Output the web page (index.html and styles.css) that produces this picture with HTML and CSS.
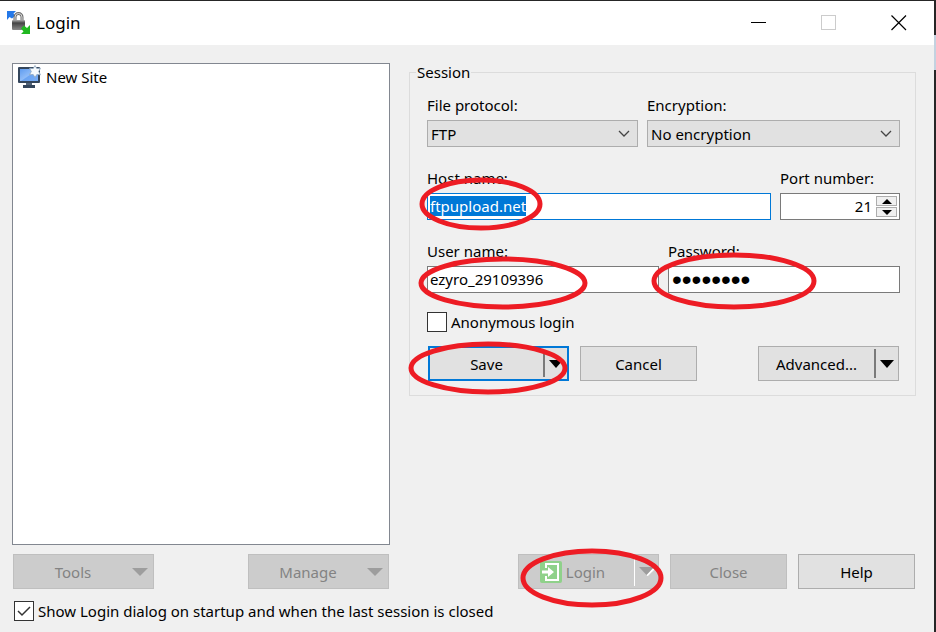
FILE: index.html
```html
<!DOCTYPE html>
<html lang="en">
<head>
  <meta charset="UTF-8">
  <meta name="viewport" content="width=device-width, initial-scale=1.0">
  <title>Login</title>
  <link rel="stylesheet" href="styles.css">
</head>
<body>
  <div class="dialog">
    <header class="titlebar">
      <svg class="app-icon" width="24" height="24" viewBox="0 0 24 24">
        <defs>
          <linearGradient id="lockBody" x1="0" x2="0" y1="0" y2="1">
            <stop offset="0" stop-color="#aaa"/>
            <stop offset="0.3" stop-color="#444"/>
            <stop offset="1" stop-color="#8a8a8a"/>
          </linearGradient>
        </defs>
        <path d="M0 0h9L6.500 2.500 8 5 5 7.500 2.500 6 0 9z" fill="#2478e8"/>
        <path d="M8 10V6a3.500 3.500 0 0 1 7 0V10" fill="none" stroke="#6c6c6c" stroke-width="3"/>
        <path d="M8 10V6a3.500 3.500 0 0 1 7 0V10" fill="none" stroke="#ddd" stroke-width="1"/>
        <rect x="5" y="9" width="13" height="10" rx="1" fill="url(#lockBody)"/>
        <path d="M23 23h-9l2.500-2.500L14 17.500l3-3 3 2.500 3-3z" fill="#20b820"/>
      </svg>
      <h1>Login</h1>
      <div class="window-buttons">
        <button type="button" aria-label="Minimize"><svg width="16" height="16"><path d="M0 7.500h15" stroke="#000"/></svg></button>
        <button type="button" aria-label="Maximize" disabled><svg width="16" height="16"><rect x="0.500" y="0.500" width="14" height="14" fill="none" stroke="#ccc"/></svg></button>
        <button type="button" aria-label="Close window"><svg width="16" height="16"><path d="M0.500 0.500l14.500 14.500M15 0.500L0.500 15" stroke="#000" stroke-width="1.200"/></svg></button>
      </div>
    </header>

    <main class="content">
      <ul class="site-list">
        <li>
          <svg width="24" height="24" viewBox="0 0 24 24">
            <defs>
              <linearGradient id="screen" x1="0" x2="1" y1="0" y2="1">
                <stop offset="0" stop-color="#5f9cf0"/>
                <stop offset="0.500" stop-color="#8fbcf8"/>
                <stop offset="0.550" stop-color="#6ba4f2"/>
                <stop offset="1" stop-color="#77aef8"/>
              </linearGradient>
            </defs>
            <rect x="0" y="2" width="22" height="16" rx="1" fill="#34465c"/>
            <rect x="2" y="4" width="18" height="12" fill="url(#screen)"/>
            <path d="M8 18h6v2h-6z" fill="#526378"/>
            <path d="M5 20h12v3H5z" fill="#34465c"/>
            <path d="M17 0.500l1.800 3 3.700-.3-1.800 3.300 1.800 3.300-3.700-.3-1.800 3-1.800-3-3.700.3 1.800-3.300-1.800-3.300 3.700.3z" fill="#f6fafd" stroke="#8ba4bd" stroke-width="0.800"/>
          </svg>
          <span>New Site</span>
        </li>
      </ul>

      <fieldset class="session">
        <legend>Session</legend>
        <div class="row row-protocol">
          <div class="field">
            <label for="protocol">File protocol:</label>
            <select id="protocol"><option>FTP</option></select>
          </div>
          <div class="field">
            <label for="encryption">Encryption:</label>
            <select id="encryption"><option>No encryption</option></select>
          </div>
        </div>
        <div class="row row-host">
          <div class="field">
            <label for="host">Host name:</label>
            <input type="text" id="host" class="host" value="ftpupload.net" autofocus>
            <svg class="mark mark-host" width="124" height="54"><ellipse cx="62" cy="27" rx="59" ry="24"/></svg>
          </div>
          <div class="field">
            <label for="port">Port number:</label>
            <div class="spinner">
              <input type="text" id="port" inputmode="numeric" value="21">
              <div class="spin-buttons">
                <button type="button" aria-label="Increase port"><svg width="10" height="5"><path d="M0 5l5-5 5 5z"/></svg></button>
                <button type="button" aria-label="Decrease port"><svg width="10" height="5"><path d="M0 0h10L5 5z"/></svg></button>
              </div>
            </div>
          </div>
        </div>
        <div class="row row-user">
          <div class="field">
            <label for="user">User name:</label>
            <input type="text" id="user" value="ezyro_29109396">
            <svg class="mark mark-user" width="170" height="54"><ellipse cx="85" cy="27" rx="82" ry="24"/></svg>
          </div>
          <div class="field">
            <label for="password">Password:</label>
            <input type="password" id="password" class="password" value="abcdefgh">
            <svg class="mark mark-password" width="166" height="58"><ellipse cx="83" cy="29" rx="80" ry="26"/></svg>
          </div>
        </div>
        <label class="check anonymous"><input type="checkbox"> Anonymous login</label>
        <div class="actions">
          <div class="split default">
            <button type="button">Save</button>
            <button type="button" class="drop" aria-label="Save options"><svg width="14" height="8"><path d="M0 0h14L7 8z"/></svg></button>
            <svg class="mark mark-save" width="160" height="54"><ellipse cx="80" cy="27" rx="77" ry="24"/></svg>
          </div>
          <button type="button" class="btn">Cancel</button>
          <div class="split advanced">
            <button type="button">Advanced...</button>
            <button type="button" class="drop" aria-label="Advanced options"><svg width="14" height="8"><path d="M0 0h14L7 8z"/></svg></button>
          </div>
        </div>
      </fieldset>

      <div class="site-actions">
        <button type="button" class="btn menu" disabled><span>Tools</span><svg width="16" height="8"><path d="M0 0h16L8 8z"/></svg></button>
        <button type="button" class="btn menu" disabled><span>Manage</span><svg width="16" height="8"><path d="M0 0h16L8 8z"/></svg></button>
      </div>

      <div class="dialog-actions">
        <div class="split disabled">
          <button type="button" class="login" disabled>
            <svg width="22" height="22" viewBox="0 0 22 22">
              <rect width="22" height="22" rx="2" fill="#8fd18a"/>
              <path d="M6 7V3h12v16H6v-4" fill="none" stroke="#fff" stroke-width="2"/>
              <path d="M2 9.500h6V6l6 5-6 5v-3.500H2z" fill="#fff"/>
            </svg>
            Login
          </button>
          <button type="button" class="drop" aria-label="Login options" disabled><svg width="16" height="9"><path d="M8 8.500L15.500 1" class="shine"/><path d="M0 0h15L7.500 8z"/></svg></button>
          <svg class="mark mark-login" width="144" height="61"><ellipse cx="72" cy="30" rx="69" ry="27"/></svg>
        </div>
        <button type="button" class="btn" disabled>Close</button>
        <button type="button" class="btn">Help</button>
      </div>
    </main>

    <footer class="startup">
      <label class="check"><input type="checkbox" checked> Show Login dialog on startup and when the last session is closed</label>
    </footer>
  </div>
  <script src="login.js"></script>
</body>
</html>
```
FILE: styles.css
```css
* {
  box-sizing: border-box;
}

body {
  margin: 0;
  font-family: "Noto Sans", "Open Sans", sans-serif;
  font-size: 15px;
  line-height: 20px;
  color: #000;
  background: linear-gradient(#262626 35px, #c3d2e0 35px, #c3d2e0 70px, #262626 70px);
}

button,
input,
select {
  font: inherit;
  color: inherit;
  margin: 0;
}

.dialog {
  display: flex;
  flex-direction: column;
  min-height: 100vh;
  margin-right: 2px;
  border-top: 1px solid #262626;
  background: #f0f0f0;
}

/* title bar */
.titlebar {
  display: flex;
  align-items: center;
  height: 44px;
  padding-left: 7px;
  background: #fff;
}

.titlebar h1 {
  margin: 0 0 0 5px;
  font-size: 17px;
  font-weight: normal;
}

.window-buttons {
  display: flex;
  margin-left: auto;
}

.window-buttons button {
  display: flex;
  align-items: center;
  justify-content: center;
  width: 70px;
  height: 44px;
  padding: 0;
  border: none;
  background: none;
}

/* main area */
.content {
  display: grid;
  flex: 1;
  grid-template-columns: 378fr 507fr;
  grid-template-rows: 1fr auto;
  gap: 9px 19px;
  padding: 18px 18px 0 12px;
}

.site-list {
  margin: 0;
  padding: 1px 5px;
  list-style: none;
  border: 1px solid #828790;
  background: #fff;
}

.site-list li {
  display: flex;
  align-items: center;
  gap: 4px;
}

.session {
  align-self: start;
  min-width: 0;
  margin: 0;
  padding: 14px 15px 14px 17px;
  border: 1px solid #dcdcdc;
}

.session legend {
  margin-left: -11px;
  padding: 0 1px;
  line-height: 18px;
}

.row {
  display: grid;
  gap: 9px;
  margin-bottom: 21px;
}

.row-protocol {
  grid-template-columns: 211fr 253fr;
}

.row-host {
  grid-template-columns: 344fr 120fr;
}

.row-user {
  grid-template-columns: 1fr 1fr;
  margin-bottom: 19px;
}

.field {
  position: relative;
  display: flex;
  flex-direction: column;
  gap: 5px;
  min-width: 0;
}

.field input,
.field select {
  width: 100%;
  height: 27px;
  padding: 0 2px 2px;
  border: 1px solid #7a7a7a;
  border-radius: 0;
  outline: none;
  background: #fff;
}

.field select {
  appearance: none;
  padding: 0 3px;
  border-color: #adadad;
  background: #e1e1e1 url("data:image/svg+xml,%3Csvg xmlns='http://www.w3.org/2000/svg' width='12' height='7'%3E%3Cpath d='M1 1l5 5 5-5' fill='none' stroke='%23444' stroke-width='1.3'/%3E%3C/svg%3E") no-repeat right 7px center;
}

.field .host {
  border-color: #0078d7;
}

.host::selection {
  color: #fff;
  background: #0078d7;
}

.field .password {
  padding: 0 3px;
  font-family: "Liberation Sans", sans-serif;
  font-size: 28px;
}

.spinner {
  display: flex;
  height: 27px;
  padding: 2px;
  border: 1px solid #7a7a7a;
  background: #fff;
}

.field .spinner input {
  flex: 1;
  min-width: 0;
  height: 21px;
  padding-right: 4px;
  border: none;
  text-align: right;
}

.spin-buttons {
  display: flex;
  flex-direction: column;
  gap: 1px;
}

.spin-buttons button {
  display: flex;
  flex: 1;
  align-items: center;
  justify-content: center;
  width: 21px;
  padding: 0;
  border: 1px solid #adadad;
  background: #f0f0f0;
}

.check {
  display: flex;
  align-items: center;
  gap: 4px;
}

.check input {
  flex: none;
  width: 20px;
  height: 20px;
  appearance: none;
  border: 1px solid #333;
  background: #fff;
}

.check input:checked {
  background: #fff url("data:image/svg+xml,%3Csvg xmlns='http://www.w3.org/2000/svg' width='14' height='11'%3E%3Cpath d='M1 5l4 4 8-8' fill='none' stroke='%23333' stroke-width='1.5'/%3E%3C/svg%3E") no-repeat center;
}

/* buttons */
.btn,
.split {
  height: 35px;
  border: 1px solid #adadad;
  border-radius: 0;
  background: #e1e1e1;
}

.btn {
  width: 117px;
  padding: 0;
}

.split {
  position: relative;
  display: flex;
  width: 141px;
}

.split button {
  display: flex;
  flex: 1;
  align-items: center;
  justify-content: center;
  gap: 4px;
  padding: 0;
  border: none;
  background: none;
}

.split .login {
  padding-right: 8px;
}

.split .drop {
  flex: none;
  width: 24px;
  margin: 2px 0;
  border-left: 2px solid #7a7a7a;
}

.split.default {
  border: 2px solid #0078d7;
}

.btn:disabled,
.split.disabled {
  border-color: #bfbfbf;
  color: #838383;
  background: #ccc;
}

.disabled .drop {
  border-left: 1px solid #fff;
}

.disabled .drop path,
.menu path {
  fill: #9d9d9d;
}

.disabled .drop .shine {
  fill: none;
  stroke: #fff;
  stroke-width: 2px;
}

.menu {
  display: flex;
  align-items: center;
  width: 141px;
  padding-right: 5px;
}

.menu span {
  flex: 1;
}

.actions {
  display: flex;
  gap: 11px;
  margin-top: 14px;
  padding: 0 1px;
}

.advanced {
  margin-left: auto;
}

.site-actions {
  display: flex;
  justify-content: space-between;
  padding: 0 1px;
}

.dialog-actions {
  display: flex;
  justify-content: flex-end;
  gap: 11px;
  padding-right: 1px;
}

.startup {
  padding: 12px 14px 11px;
}

/* red circles around the fields to fill in */
.mark {
  position: absolute;
  z-index: 1;
  pointer-events: none;
}

.mark ellipse {
  fill: none;
  stroke: #ed1c24;
  stroke-width: 5px;
}

.mark-host {
  left: -8px;
  top: 9px;
}

.mark-user {
  left: -9px;
  top: 15px;
}

.mark-password {
  left: -17px;
  top: 11px;
}

.mark-save {
  left: -22px;
  top: -7px;
}

.mark-login {
  left: 1px;
  top: -7px;
}
```
FILE: login.js
```javascript
const host = document.getElementById('host');
host.focus();
host.select();
```
